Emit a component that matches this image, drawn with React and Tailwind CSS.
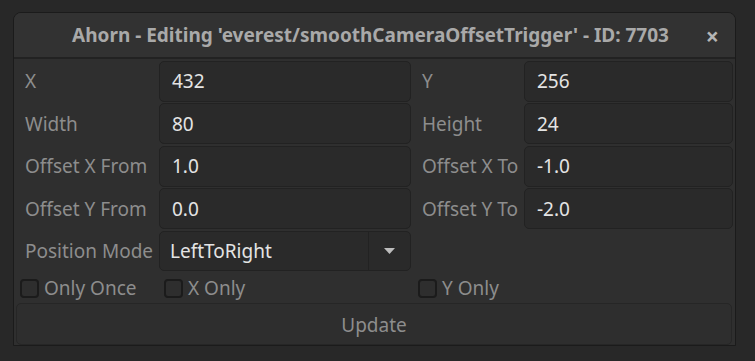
import React from "react";

const font = { fontFamily: '"Noto Sans", "Open Sans", sans-serif' };

function Field({ value }) {
  return (
    <div className="h-full rounded-[5px] border border-[#222222] bg-[#2a2a2a] flex items-center pl-[12px] text-[19px] text-[#e4e4e4]">
      {value}
    </div>
  );
}

function Label({ children }) {
  return (
    <div className="h-full flex items-center pl-[11px] text-[19px] text-[#8d8d8d] whitespace-nowrap overflow-hidden">
      {children}
    </div>
  );
}

function Check({ label }) {
  return (
    <label className="flex items-center gap-[5px] text-[19px] text-[#8d8d8d]">
      <span className="w-[19px] h-[19px] rounded-[4px] border-2 border-[#1b1b1b] bg-[#2e2e2e]" />
      {label}
    </label>
  );
}

const rows = [
  ["X", "432", "Y", "256"],
  ["Width", "80", "Height", "24"],
  ["Offset X From", "1.0", "Offset X To", "-1.0"],
  ["Offset Y From", "0.0", "Offset Y To", "-2.0"],
];

export default function App() {
  return (
    <div className="w-[755px] h-[361px] bg-[#282828] pt-[12px] pl-[13px]" style={font}>
      <div className="w-[723px] h-[334px] rounded-t-[8px] border border-[#1b1b1b] bg-[#2f2f2f] flex flex-col overflow-hidden">
        <div className="h-[46px] shrink-0 bg-[#323232] border-b-2 border-[#222222] flex items-center relative">
          <div className="w-full text-center text-[19px] font-bold text-[#a9a9a9] pr-[8px]">
            Ahorn - Editing 'everest/smoothCameraOffsetTrigger' - ID: 7703
          </div>
          <span className="absolute right-[16px] top-[6px] text-[23px] font-bold text-[#b5b5b5]">×</span>
        </div>
        <div className="flex flex-col pt-[1px] pr-[1px]">
          {rows.map((r) => (
            <div key={r[0]} className="grid grid-cols-[145px_252px_113px_209px] h-[42.5px] py-[0.75px]">
              <Label>{r[0]}</Label>
              <Field value={r[1]} />
              <Label>{r[2]}</Label>
              <Field value={r[3]} />
            </div>
          ))}
          <div className="grid grid-cols-[145px_252px_113px_209px] h-[42px] py-[0.75px]">
            <Label>Position Mode</Label>
            <div className="h-full rounded-[5px] border border-[#222222] bg-[#2a2a2a] flex text-[19px] text-[#e4e4e4]">
              <div className="flex-1 flex items-center pl-[10px]">LeftToRight</div>
              <div className="w-[42px] border-l border-[#222222] flex items-center justify-center">
                <svg width="11" height="6" viewBox="0 0 11 6">
                  <path d="M0 0 H11 L5.5 6 Z" fill="#bdbdbd" />
                </svg>
              </div>
            </div>
          </div>
          <div className="h-[30px] flex items-center pl-[6px] pt-[3px]">
            <div className="w-[144px]">
              <Check label="Only Once" />
            </div>
            <div className="w-[254px]">
              <Check label="X Only" />
            </div>
            <Check label="Y Only" />
          </div>
          <div className="h-[42px] mx-[2px] mt-[1px] rounded-[5px] border border-[#262626] bg-[#2e2e2e] flex items-center justify-center text-[19px] text-[#8d8d8d] pt-[2px]">
            Update
          </div>
        </div>
      </div>
    </div>
  );
}
